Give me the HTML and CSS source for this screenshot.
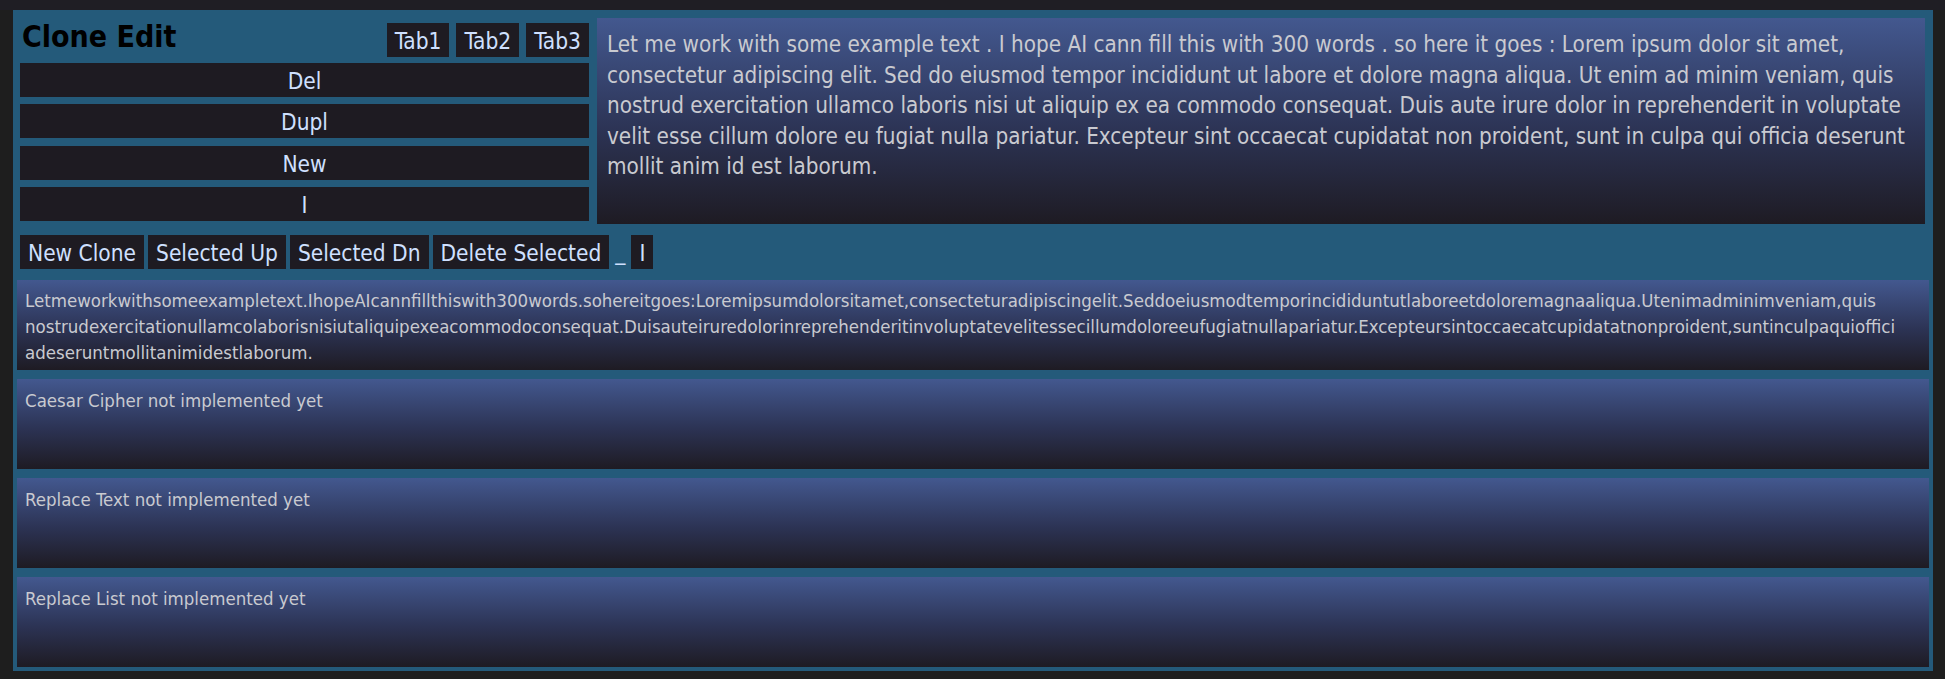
FILE: index.html
```html
<!DOCTYPE html>
<html lang="en">
<head>
<meta charset="utf-8">
<title>Clone Edit</title>
<link rel="stylesheet" href="styles.css">
</head>
<body>
<div class="topbar"></div>
<main class="app">
  <section class="top">
    <div class="side">
      <div class="side-head">
        <h1 class="title">Clone Edit</h1>
        <div class="tabs">
          <button class="btn">Tab1</button>
          <button class="btn">Tab2</button>
          <button class="btn">Tab3</button>
        </div>
      </div>
      <div class="actions">
        <button class="btn wide">Del</button>
        <button class="btn wide">Dupl</button>
        <button class="btn wide">New</button>
        <button class="btn wide">I</button>
      </div>
    </div>
    <div class="editor">Let me work with some example text . I hope AI cann fill this with 300 words . so here it goes : Lorem ipsum dolor sit amet,<br>consectetur adipiscing elit. Sed do eiusmod tempor incididunt ut labore et dolore magna aliqua. Ut enim ad minim veniam, quis<br>nostrud exercitation ullamco laboris nisi ut aliquip ex ea commodo consequat. Duis aute irure dolor in reprehenderit in voluptate<br>velit esse cillum dolore eu fugiat nulla pariatur. Excepteur sint occaecat cupidatat non proident, sunt in culpa qui officia deserunt<br>mollit anim id est laborum.</div>
  </section>
  <div class="toolbar">
    <button class="btn">New Clone</button>
    <button class="btn">Selected Up</button>
    <button class="btn">Selected Dn</button>
    <button class="btn">Delete Selected</button>
    <span class="sep">_</span>
    <button class="btn">I</button>
  </div>
  <div class="panel output">Letmeworkwithsomeexampletext.IhopeAIcannfillthiswith300words.sohereitgoes:Loremipsumdolorsitamet,consecteturadipiscingelit.Seddoeiusmodtemporincididuntutlaboreetdoloremagnaaliqua.Utenimadminimveniam,quis<br>nostrudexercitationullamcolaborisnisiutaliquipexeacommodoconsequat.Duisauteiruredolorinreprehenderitinvoluptatevelitessecillumdoloreeufugiatnullapariatur.Excepteursintoccaecatcupidatatnonproident,suntinculpaquioffici<br>adeseruntmollitanimidestlaborum.</div>
  <div class="panel">Caesar Cipher not implemented yet</div>
  <div class="panel">Replace Text not implemented yet</div>
  <div class="panel">Replace List not implemented yet</div>
</main>
</body>
</html>
```

FILE: styles.css
```css
* {
  box-sizing: border-box;
}

html, body {
  margin: 0;
  padding: 0;
}

body {
  background: #1e1e1e;
  font-family: "DejaVu Sans Condensed", "Liberation Sans", sans-serif;
  font-stretch: condensed;
  width: 1945px;
  height: 679px;
  overflow: hidden;
}

.topbar {
  height: 10px;
  background: #1f1e24;
}

.app {
  margin-left: 13px;
  width: 1920px;
  height: 661px;
  padding: 4px;
  background: #245a7a;
  display: flex;
  flex-direction: column;
}

.top {
  display: grid;
  grid-template-columns: 569px 1328px;
  column-gap: 8px;
  padding: 4px 3px;
  height: 214px;
}

.side {
  display: flex;
  flex-direction: column;
}

.side-head {
  display: flex;
  justify-content: space-between;
  align-items: flex-start;
  height: 39px;
  margin-bottom: 6px;
}

.title {
  margin: 0;
  padding-left: 2px;
  font-size: 30px;
  font-weight: bold;
  line-height: 37px;
  color: #000;
}

.tabs {
  display: flex;
  gap: 7px;
  margin-top: 5px;
}

.btn {
  background: #1e1b22;
  color: #cfe0ff;
  border: none;
  border-radius: 0;
  margin: 0;
  font-family: inherit;
  font-stretch: inherit;
  font-size: 22.5px;
  height: 34px;
  line-height: 32px;
  padding: 2px 8px 0;
}

.actions {
  display: flex;
  flex-direction: column;
  gap: 7.33px;
}

.wide {
  width: 100%;
  text-align: center;
}

.editor {
  background: linear-gradient(to bottom, #43588f 0%, #2c3354 55%, #1e1b23 100%);
  color: #c9cad0;
  font-size: 22.3px;
  line-height: 30.5px;
  padding: 11px 10px 0;
  white-space: nowrap;
  overflow: hidden;
}

.toolbar {
  display: flex;
  align-items: center;
  gap: 4px;
  height: 34px;
  margin-top: 7px;
  padding: 0 3px;
}

.sep {
  color: #cfe0ff;
  font-size: 22.5px;
  margin: 0 2px;
  line-height: 34px;
}

.panel {
  height: 90px;
  margin-top: 9px;
  padding: 9px 8px 0;
  background: linear-gradient(to bottom, #43588f 0%, #2c3354 55%, #1e1b23 100%);
  color: #c9cad0;
  font-size: 18.5px;
  line-height: 26px;
}

.output {
  margin-top: 11px;
  padding-top: 8px;
  white-space: nowrap;
  overflow: hidden;
}
```
